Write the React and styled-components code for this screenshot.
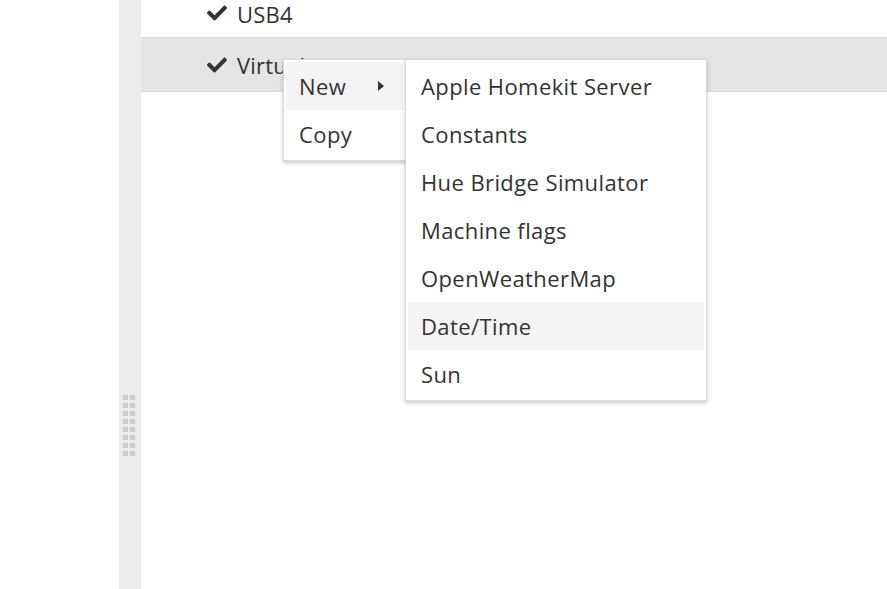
import styled, { createGlobalStyle } from 'styled-components';
import { FaCheck } from 'react-icons/fa';

const GlobalStyle = createGlobalStyle`
  html, body {
    margin: 0;
    padding: 0;
    height: 100%;
    overflow: hidden;
    background: #ffffff;
  }
  body {
    font-family: "Open Sans", "Noto Sans", sans-serif;
    color: #333333;
  }
`;

const Page = styled.div`
  display: flex;
  height: 589px;
  position: relative;
`;

const LeftPane = styled.div`
  width: 119px;
  background: #ffffff;
`;

const Splitter = styled.div`
  width: 22px;
  background: #ececec;
  display: flex;
  flex-direction: column;
  align-items: center;
  padding-top: 395px;
  box-sizing: border-box;
`;

const Grip = styled.div`
  display: grid;
  grid-template-columns: repeat(2, 5px);
  grid-auto-rows: 5px;
  gap: 3px 2px;
  margin-left: -2px;
`;

const GripDot = styled.span`
  background: #cfcfcf;
`;

const Main = styled.div`
  flex: 1;
`;

const Row = styled.div`
  height: ${p => (p.$top ? 38 : 54)}px;
  display: flex;
  align-items: ${p => (p.$top ? 'flex-start' : 'center')};
  line-height: ${p => (p.$top ? 28 : 30)}px;
  padding-left: 66px;
  gap: 8px;
  font-size: 22px;
  letter-spacing: 0.2px;
  background: ${p => (p.$selected ? '#e5e5e5' : '#ffffff')};
  border-bottom: 1px solid #dadada;
  box-sizing: border-box;
  color: #333333;
`;

const Check = styled(FaCheck)`
  width: 24px;
  height: 20px;
  color: #333333;
  flex-shrink: 0;
  margin-left: -2px;
  margin-top: ${p => (p.$top ? 3 : 0)}px;
`;

const Menu = styled.div`
  position: absolute;
  top: ${p => p.$top}px;
  left: ${p => p.$left}px;
  width: ${p => p.$width}px;
  background: #ffffff;
  border: 1px solid #d8d8d8;
  box-shadow: 0 2px 4px rgba(0, 0, 0, 0.22);
  padding: 2px;
  box-sizing: border-box;
  font-size: 22px;
  letter-spacing: 0.4px;
`;

const Item = styled.div`
  height: 48px;
  display: flex;
  align-items: center;
  justify-content: space-between;
  padding: 0 14px 0 13px;
  background: ${p => (p.$hover ? '#f4f4f4' : 'transparent')};
  color: #333333;
  white-space: nowrap;
`;

const Caret = styled.span`
  width: 0;
  height: 0;
  border-top: 5px solid transparent;
  border-bottom: 5px solid transparent;
  border-left: 6px solid #333333;
  margin-right: 5px;
`;

const submenu = [
  'Apple Homekit Server',
  'Constants',
  'Hue Bridge Simulator',
  'Machine flags',
  'OpenWeatherMap',
  'Date/Time',
  'Sun',
];

export default function App() {
  return (
    <>
      <GlobalStyle />
      <Page>
        <LeftPane />
        <Splitter>
          <Grip>
            {Array.from({ length: 16 }).map((_, i) => (
              <GripDot key={i} />
            ))}
          </Grip>
        </Splitter>
        <Main>
          <Row $top>
            <Check $top />
            <span>USB4</span>
          </Row>
          <Row $selected>
            <Check />
            <span>Virtual</span>
          </Row>
        </Main>

        <Menu $top={59} $left={283} $width={123}>
          <Item $hover>
            <span>New</span>
            <Caret />
          </Item>
          <Item>
            <span>Copy</span>
          </Item>
        </Menu>

        <Menu $top={59} $left={405} $width={302}>
          {submenu.map(label => (
            <Item key={label} $hover={label === 'Date/Time'}>
              <span>{label}</span>
            </Item>
          ))}
        </Menu>
      </Page>
    </>
  );
}
